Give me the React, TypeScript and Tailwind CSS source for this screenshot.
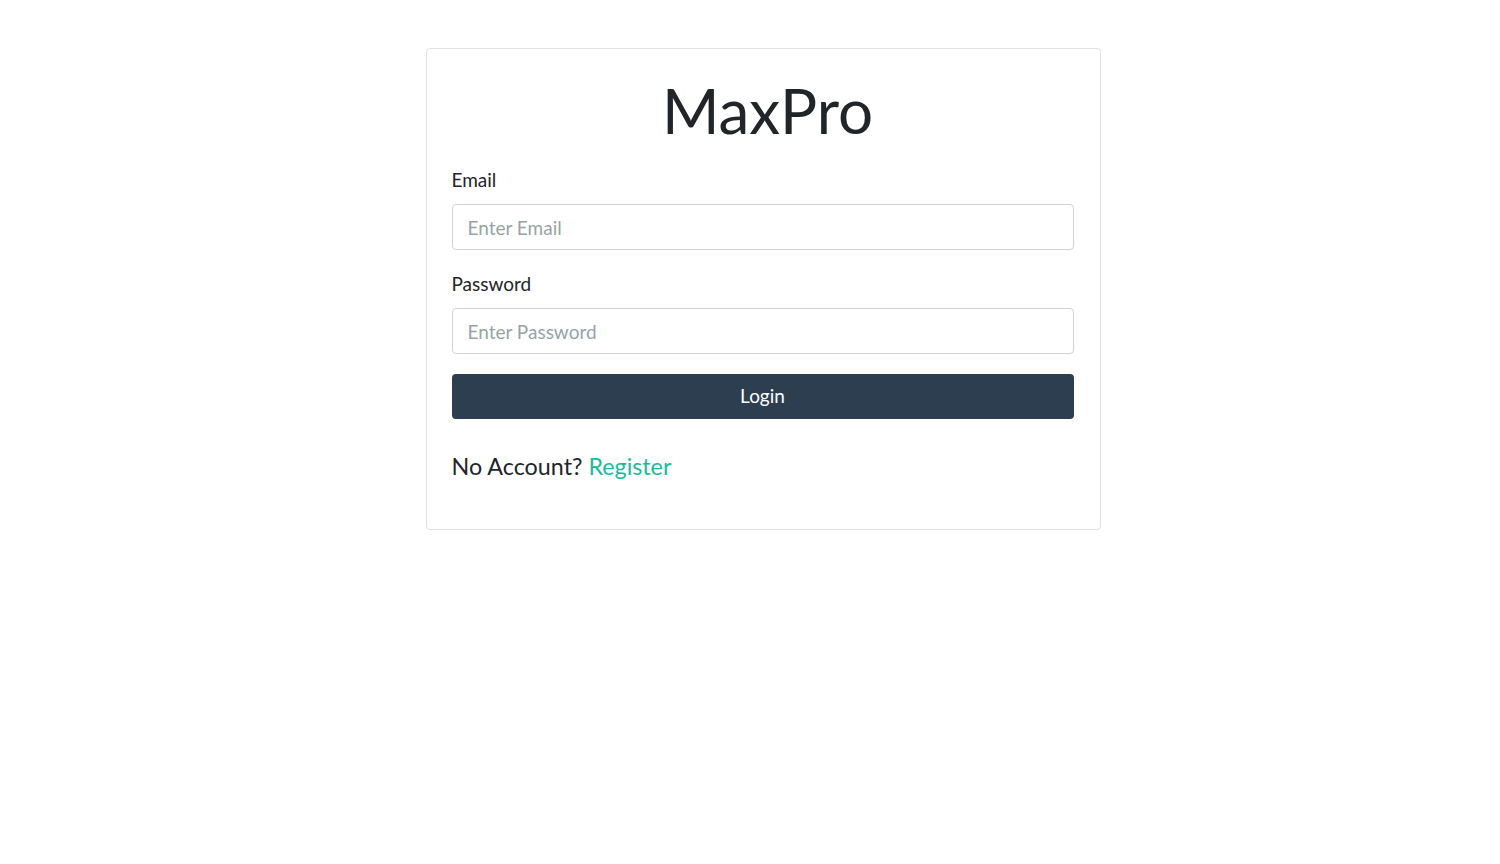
const App: React.FC = () => {
  return (
    <div className="min-h-screen bg-white font-['Lato',sans-serif] text-[#212529]">
      <div className="flex justify-center pt-[48px] pl-[26px]">
        <div className="w-[675px] rounded border border-[#dee2e6] pl-[25px] pr-[26px] pt-[30px] pb-[48px]">
          <h1 className="pl-[10px] text-center text-[62px] leading-none">MaxPro</h1>
          <form className="mt-[27px]" onSubmit={(e) => e.preventDefault()}>
            <label className="block text-[19px] leading-[24px]">Email</label>
            <input
              type="email"
              placeholder="Enter Email"
              className="mt-[12px] block h-[46px] w-full rounded border border-[#ced4da] px-[15px] text-[19px] placeholder:text-[#95a5a6] outline-none"
            />
            <label className="mt-[22px] block text-[19px] leading-[24px]">Password</label>
            <input
              type="password"
              placeholder="Enter Password"
              className="mt-[12px] block h-[46px] w-full rounded border border-[#ced4da] px-[15px] text-[19px] placeholder:text-[#95a5a6] outline-none"
            />
            <button
              type="submit"
              className="mt-[20px] block h-[45px] w-full rounded bg-[#2c3e50] pb-[1px] text-[19px] text-white"
            >
              Login
            </button>
          </form>
          <p className="mt-[34px] text-[23.3px] leading-[1.2]">
            No Account? <a href="#" className="text-[#18bc9c]">Register</a>
          </p>
        </div>
      </div>
    </div>
  );
};

export default App;
